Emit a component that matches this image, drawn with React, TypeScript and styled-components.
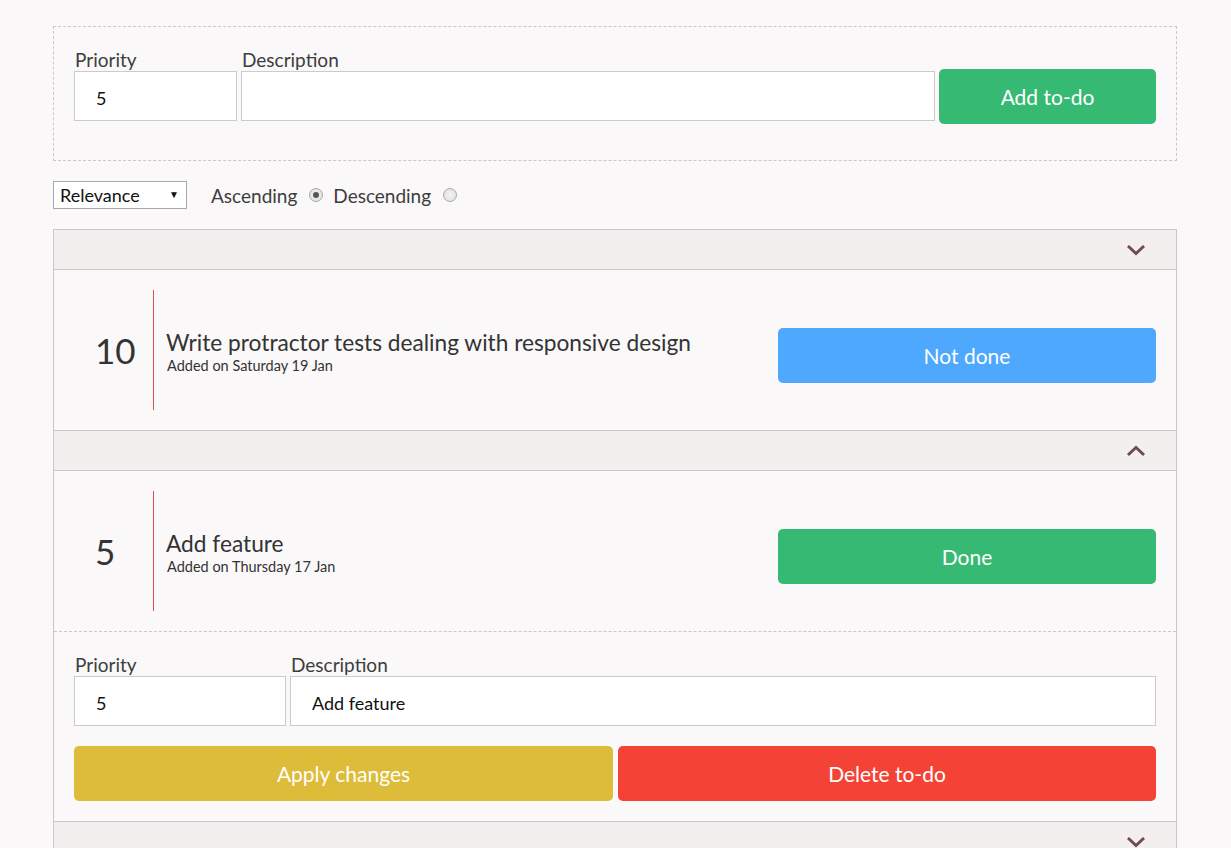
import React from "react";
import styled, { createGlobalStyle } from "styled-components";

const Global = createGlobalStyle`
  html, body { margin: 0; padding: 0; }
  body {
    background: #faf8f9;
    font-family: Lato, "Open Sans", sans-serif;
    color: #333;
  }
  * { box-sizing: border-box; }
`;

const Page = styled.div`
  padding: 26px 54px 0 53px;
  width: 1231px;
`;

const FormBox = styled.div`
  border: 1px dashed #c8c8c8;
  padding: 22px 20px 39px 20px;
`;

const FormGrid = styled.div<{ $cols: string }>`
  display: grid;
  grid-template-columns: ${(p) => p.$cols};
  grid-template-rows: auto 50px;
  column-gap: 4px;
`;

const Label = styled.label`
  grid-row: 1;
  font-size: 19px;
  line-height: 22px;
  color: #3d3d3d;
  padding-left: 1px;
`;

const TextInput = styled.input`
  grid-row: 2;
  height: 50px;
  border: 1px solid #cbcbcb;
  background: #fff;
  font-family: inherit;
  font-size: 18px;
  color: #111;
  padding: 4px 0 0 21px;
  outline: none;
  width: 100%;
`;

const Btn = styled.button<{ $bg: string }>`
  height: 55px;
  border: none;
  border-radius: 5px;
  background: ${(p) => p.$bg};
  color: #fff;
  font-family: inherit;
  font-size: 21px;
  cursor: pointer;
  width: 100%;
`;

const AddBtn = styled(Btn)`
  grid-column: 3;
  grid-row: 2;
  align-self: center;
  margin-top: 1px;
`;

const SortRow = styled.div`
  display: flex;
  align-items: center;
  margin: 20px 0 20px 0;
  height: 28px;
  font-size: 19px;
  color: #3d3d3d;
`;

const SelectWrap = styled.div`
  position: relative;
  width: 134px;
  height: 28px;
  margin-right: 24px;
`;

const Select = styled.select`
  appearance: none;
  -webkit-appearance: none;
  width: 100%;
  height: 100%;
  border: 1px solid #a8a8a8;
  border-radius: 0;
  background: #fff;
  font-family: inherit;
  font-size: 18px;
  color: #111;
  padding: 0 0 0 6px;
`;

const Arrow = styled.span`
  position: absolute;
  right: 8px;
  top: 7px;
  font-size: 10px;
  color: #111;
  pointer-events: none;
`;

const RadioLabel = styled.span`
  margin-right: 8px;
`;

const Radio = styled.input`
  appearance: none;
  -webkit-appearance: none;
  margin: 0 10px 0 4px;
  width: 14px;
  height: 14px;
  border-radius: 50%;
  border: 1px solid #a9a9a9;
  background: radial-gradient(circle, #f4f4f4 0%, #dcdcdc 100%);
  display: grid;
  place-items: center;
  &:checked::after {
    content: "";
    width: 6px;
    height: 6px;
    border-radius: 50%;
    background: #555;
  }
`;

const List = styled.div`
  border: 1px solid #c8c8c8;
  border-bottom: none;
`;

const Header = styled.div`
  height: 40px;
  background: #f2efee;
  border-bottom: 1px solid #c8c8c8;
  display: flex;
  align-items: center;
  justify-content: flex-end;
  padding-right: 30px;
`;

const CardBody = styled.div<{ $last?: boolean }>`
  height: 161px;
  border-bottom: 1px ${(p) => (p.$last ? "dashed" : "solid")} #c8c8c8;
  display: flex;
  align-items: center;
  padding: 20px 20px 20px 0;
`;

const PriorityNum = styled.div`
  width: 100px;
  height: 120px;
  border-right: 1px solid #d9534f;
  display: flex;
  align-items: center;
  padding-left: 41px;
  font-size: 35px;
  color: #333;
`;

const Info = styled.div`
  flex: 1;
  padding-left: 12px;
  margin-top: 4px;
  display: flex;
  flex-direction: column;
`;

const Title = styled.div`
  font-size: 22.7px;
  line-height: 27px;
  color: #333;
`;

const DateLine = styled.div`
  font-size: 14.5px;
  line-height: 20px;
  color: #333;
  padding-left: 1px;
`;

const StatusBtn = styled(Btn)`
  width: 378px;
  margin-top: 11px;
`;

const EditBox = styled.div`
  border-bottom: 1px solid #c8c8c8;
  padding: 22px 20px 20px 20px;
`;

const EditButtons = styled.div`
  display: grid;
  grid-template-columns: 539px 538px;
  column-gap: 5px;
  margin-top: 20px;
`;

const Chevron = ({ up }: { up?: boolean }) => (
  <svg width="20" height="12" viewBox="0 0 20 12">
    <polyline
      points={up ? "2,10 10,2.5 18,10" : "2,2 10,9.5 18,2"}
      fill="none"
      stroke="#6e4c4e"
      strokeWidth="3"
    />
  </svg>
);

type Todo = { p: number; title: string; date: string; done: boolean; open?: boolean };

const todos: Todo[] = [
  { p: 10, title: "Write protractor tests dealing with responsive design", date: "Added on Saturday 19 Jan", done: false },
  { p: 5, title: "Add feature", date: "Added on Thursday 17 Jan", done: true, open: true },
];

export default function App() {
  return (
    <>
      <Global />
      <Page>
        <FormBox>
          <FormGrid $cols="163px 694px 217px">
            <Label>Priority</Label>
            <Label>Description</Label>
            <TextInput defaultValue="5" />
            <TextInput defaultValue="" />
            <AddBtn $bg="#36ba73">Add to-do</AddBtn>
          </FormGrid>
        </FormBox>
        <SortRow>
          <SelectWrap>
            <Select defaultValue="rel">
              <option value="rel">Relevance</option>
            </Select>
            <Arrow>▼</Arrow>
          </SelectWrap>
          <RadioLabel>Ascending</RadioLabel>
          <Radio type="radio" name="order" defaultChecked />
          <RadioLabel>Descending</RadioLabel>
          <Radio type="radio" name="order" />
        </SortRow>
        <List>
          {todos.map((t) => (
            <React.Fragment key={t.title}>
              <Header>
                <Chevron up={t.open} />
              </Header>
              <CardBody $last={t.open}>
                <PriorityNum>{t.p}</PriorityNum>
                <Info>
                  <Title>{t.title}</Title>
                  <DateLine>{t.date}</DateLine>
                </Info>
                <StatusBtn $bg={t.done ? "#36ba73" : "#4ea8fe"}>
                  {t.done ? "Done" : "Not done"}
                </StatusBtn>
              </CardBody>
              {t.open && (
                <EditBox>
                  <FormGrid $cols="212px 866px">
                    <Label>Priority</Label>
                    <Label>Description</Label>
                    <TextInput defaultValue="5" />
                    <TextInput defaultValue="Add feature" />
                  </FormGrid>
                  <EditButtons>
                    <Btn $bg="#ddbc3a">Apply changes</Btn>
                    <Btn $bg="#f44336">Delete to-do</Btn>
                  </EditButtons>
                </EditBox>
              )}
            </React.Fragment>
          ))}
          <Header>
            <Chevron />
          </Header>
        </List>
      </Page>
    </>
  );
}
